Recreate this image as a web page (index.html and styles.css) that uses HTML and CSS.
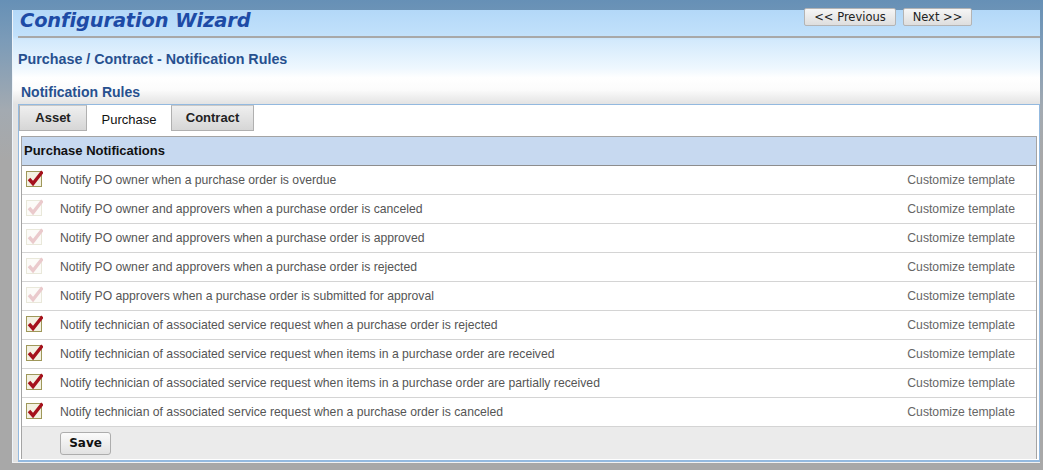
FILE: index.html
```html
<!DOCTYPE html>
<html lang="en">
  <head>
    <meta charset="UTF-8" />
    <meta name="viewport" content="width=device-width, initial-scale=1.0" />
    <title>Configuration Wizard</title>
    <link rel="stylesheet" href="styles.css">
  </head>
  <body>
    <div class="page">
      <div class="panel">
        <div class="head">
          <h1 class="title">Configuration Wizard</h1>
          <div class="nav">
            <button class="navbtn">&lt;&lt; Previous</button>
            <button class="navbtn">Next &gt;&gt;</button>
          </div>
        </div>
        <div class="sub">
          <h2 class="crumb">Purchase / Contract - Notification Rules</h2>
          <h3 class="section">Notification Rules</h3>
        </div>
        <div class="tabbox">
          <div class="tabs">
            <div class="tab">Asset</div>
            <div class="tab active">Purchase</div>
            <div class="tab">Contract</div>
          </div>
          <div class="grid">
            <div class="grid-head">Purchase Notifications</div>
            <div class="row">
              <span class="chk"><svg width="17" height="17" viewBox="0 0 17 17"><rect x="0.5" y="1.5" width="15" height="15" fill="#f3f1e2" stroke="#9f985a"/><path d="M3 9 L7 13.5 L16.5 1.5" fill="none" stroke="#a5111c" stroke-width="3.4"/></svg></span>
              <span class="label">Notify PO owner when a purchase order is overdue</span>
              <span class="link">Customize template</span>
            </div>
            <div class="row">
              <span class="chk off"><svg width="17" height="17" viewBox="0 0 17 17"><rect x="0.5" y="1.5" width="15" height="15" fill="#f3f1e2" stroke="#9f985a"/><path d="M3 9 L7 13.5 L16.5 1.5" fill="none" stroke="#a5111c" stroke-width="3.4"/></svg></span>
              <span class="label">Notify PO owner and approvers when a purchase order is canceled</span>
              <span class="link">Customize template</span>
            </div>
            <div class="row">
              <span class="chk off"><svg width="17" height="17" viewBox="0 0 17 17"><rect x="0.5" y="1.5" width="15" height="15" fill="#f3f1e2" stroke="#9f985a"/><path d="M3 9 L7 13.5 L16.5 1.5" fill="none" stroke="#a5111c" stroke-width="3.4"/></svg></span>
              <span class="label">Notify PO owner and approvers when a purchase order is approved</span>
              <span class="link">Customize template</span>
            </div>
            <div class="row">
              <span class="chk off"><svg width="17" height="17" viewBox="0 0 17 17"><rect x="0.5" y="1.5" width="15" height="15" fill="#f3f1e2" stroke="#9f985a"/><path d="M3 9 L7 13.5 L16.5 1.5" fill="none" stroke="#a5111c" stroke-width="3.4"/></svg></span>
              <span class="label">Notify PO owner and approvers when a purchase order is rejected</span>
              <span class="link">Customize template</span>
            </div>
            <div class="row">
              <span class="chk off"><svg width="17" height="17" viewBox="0 0 17 17"><rect x="0.5" y="1.5" width="15" height="15" fill="#f3f1e2" stroke="#9f985a"/><path d="M3 9 L7 13.5 L16.5 1.5" fill="none" stroke="#a5111c" stroke-width="3.4"/></svg></span>
              <span class="label">Notify PO approvers when a purchase order is submitted for approval</span>
              <span class="link">Customize template</span>
            </div>
            <div class="row">
              <span class="chk"><svg width="17" height="17" viewBox="0 0 17 17"><rect x="0.5" y="1.5" width="15" height="15" fill="#f3f1e2" stroke="#9f985a"/><path d="M3 9 L7 13.5 L16.5 1.5" fill="none" stroke="#a5111c" stroke-width="3.4"/></svg></span>
              <span class="label">Notify technician of associated service request when a purchase order is rejected</span>
              <span class="link">Customize template</span>
            </div>
            <div class="row">
              <span class="chk"><svg width="17" height="17" viewBox="0 0 17 17"><rect x="0.5" y="1.5" width="15" height="15" fill="#f3f1e2" stroke="#9f985a"/><path d="M3 9 L7 13.5 L16.5 1.5" fill="none" stroke="#a5111c" stroke-width="3.4"/></svg></span>
              <span class="label">Notify technician of associated service request when items in a purchase order are received</span>
              <span class="link">Customize template</span>
            </div>
            <div class="row">
              <span class="chk"><svg width="17" height="17" viewBox="0 0 17 17"><rect x="0.5" y="1.5" width="15" height="15" fill="#f3f1e2" stroke="#9f985a"/><path d="M3 9 L7 13.5 L16.5 1.5" fill="none" stroke="#a5111c" stroke-width="3.4"/></svg></span>
              <span class="label">Notify technician of associated service request when items in a purchase order are partially received</span>
              <span class="link">Customize template</span>
            </div>
            <div class="row">
              <span class="chk"><svg width="17" height="17" viewBox="0 0 17 17"><rect x="0.5" y="1.5" width="15" height="15" fill="#f3f1e2" stroke="#9f985a"/><path d="M3 9 L7 13.5 L16.5 1.5" fill="none" stroke="#a5111c" stroke-width="3.4"/></svg></span>
              <span class="label">Notify technician of associated service request when a purchase order is canceled</span>
              <span class="link">Customize template</span>
            </div>
            <div class="foot">
              <button class="save">Save</button>
            </div>
          </div>
        </div>
      </div>
    </div>
  </body>
</html>
```

FILE: styles.css
```css
html, body {
  margin: 0;
  padding: 0;
}
body {
  width: 1043px;
  height: 470px;
  overflow: hidden;
  font-family: "Liberation Sans", Arial, sans-serif;
}
.page {
  height: 470px;
  box-sizing: border-box;
  padding: 10px 3px 0 12px;
  background: linear-gradient(to bottom, #6690b6 0, #7b9bb8 40px, #a3aab1 110px, #a8a8a8 160px);
}
.panel {
  height: 453px;
  box-sizing: border-box;
  border-left: 1px solid #eef4fa;
  border-bottom: 1px solid #f2f2f2;
  background: linear-gradient(to bottom, #b3d8f8 0, #c2e1fb 26px, #d2e9fc 30px, #eef7fe 58px, #ffffff 68px, #fbfbfb 80px, #e3e3e3 94px);
}
.head {
  height: 26px;
  display: flex;
  justify-content: space-between;
  align-items: flex-start;
  border-bottom: 2px solid #a8a8a8;
  margin-left: 5px;
}
.title {
  margin: 0;
  padding-left: 2px;
  font-family: "DejaVu Sans", Verdana, sans-serif;
  font-size: 19.4px;
  font-style: italic;
  font-weight: bold;
  color: #1d4ba6;
  line-height: 22px;
  letter-spacing: -0.1px;
}
.nav {
  display: flex;
  gap: 7px;
  margin-top: -2px;
  margin-right: 68px;
}
.navbtn {
  height: 18px;
  padding: 0 0 1px;
  font-family: "DejaVu Sans", Verdana, sans-serif;
  font-size: 11.5px;
  color: #222;
  border: 1px solid #b4b4b4;
  border-radius: 2px;
  background: linear-gradient(to bottom, #f6f6f6, #dedede);
}
.navbtn:first-child {
  width: 92px;
}
.navbtn:last-child {
  width: 69px;
}
.sub {
  height: 66px;
  padding-left: 5px;
}
.crumb {
  margin: 0;
  padding-top: 13px;
  font-size: 14.3px;
  line-height: 16px;
  color: #27508f;
}
.section {
  margin: 0;
  padding: 17px 0 0 3px;
  font-size: 14px;
  line-height: 16px;
  color: #27508f;
}
.tabbox {
  margin-left: 5px;
  height: 358px;
  box-sizing: border-box;
  border: 1px solid #93b9df;
  border-bottom-width: 2px;
  background: #fff;
}
.tabs {
  display: flex;
  height: 27px;
}
.tab {
  height: 26px;
  box-sizing: border-box;
  border: 1px solid #b0b0b0;
  border-top-color: #c8c8c8;
  background: linear-gradient(to bottom, #efefef, #d6d6d6);
  font-size: 13px;
  font-weight: bold;
  color: #222;
  text-align: center;
  line-height: 24px;
}
.tab:nth-child(1) {
  width: 68px;
}
.tab:nth-child(2) {
  width: 84px;
}
.tab:nth-child(3) {
  width: 83px;
}
.tab.active {
  height: 28px;
  background: #fff;
  border-color: #fff;
  font-weight: normal;
  color: #111;
  line-height: 28px;
}
.grid {
  margin: 4px 2px 0 2px;
  border: 1px solid #a4a4a4;
  border-bottom: none;
}
.grid-head {
  height: 28px;
  line-height: 28px;
  padding-left: 2px;
  background: #c7d9f0;
  border-bottom: 1px solid #8d8d8d;
  font-size: 13px;
  font-weight: bold;
  color: #111;
}
.row {
  height: 28px;
  display: flex;
  align-items: center;
  border-bottom: 1px solid #d4d4d4;
  font-size: 12.2px;
  color: #555;
}
.chk {
  width: 17px;
  height: 17px;
  margin-left: 4px;
  margin-right: 17px;
  margin-top: -3px;
}
.chk svg {
  display: block;
}
.chk.off {
  opacity: 0.22;
}
.label {
  flex: 1;
}
.link {
  padding-right: 21px;
  color: #666;
}
.foot {
  height: 32px;
  display: flex;
  align-items: center;
  padding-left: 38px;
  background: #ebebeb;
}
.save {
  width: 51px;
  height: 23px;
  font-family: "DejaVu Sans", Verdana, sans-serif;
  font-size: 12px;
  font-weight: bold;
  color: #111;
  border: 1px solid #adadad;
  border-radius: 3px;
  background: linear-gradient(to bottom, #fbfbfb, #e2e2e2);
}
```
